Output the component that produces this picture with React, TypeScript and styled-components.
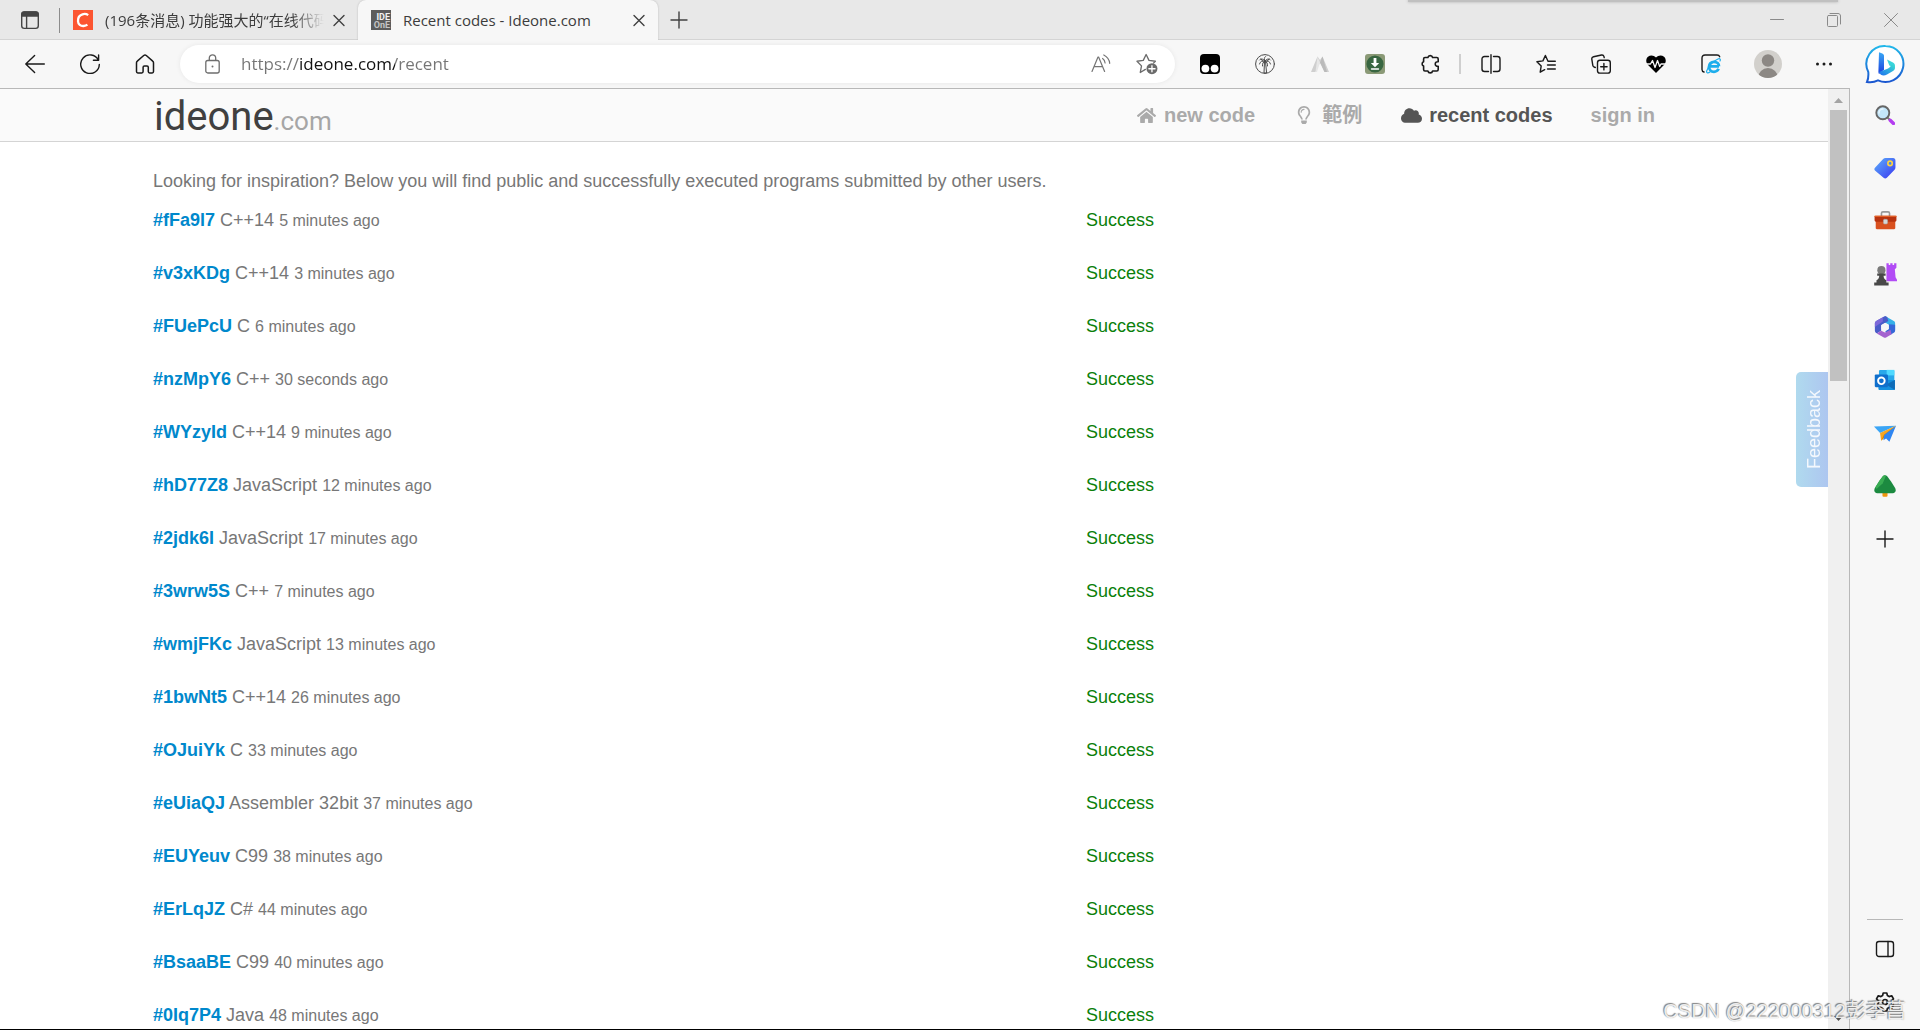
import React from "react";
import styled, { createGlobalStyle } from "styled-components";
import { FaCloud, FaHome, FaRegLightbulb } from "react-icons/fa";

const uiFont = `"Open Sans", "Noto Sans CJK SC", sans-serif`;
const pageFont = `"Liberation Sans", "Noto Sans CJK TC", sans-serif`;

const GlobalStyle = createGlobalStyle`
  *, *::before, *::after { box-sizing: border-box; }
  body { margin: 0; background: #f7f7f7; overflow: hidden; }
  button, input { font: inherit; color: inherit; }
  svg { display: block; flex: none; }
`;

const Window = styled.div`
  display: flex;
  flex-direction: column;
  height: 100vh;
  border-bottom: 1px solid #000;
  font-family: ${uiFont};
`;

/* ---------- tab strip ---------- */

const TabStrip = styled.header`
  position: relative;
  display: flex;
  flex: none;
  height: 40px;
  background: #e8e8e8;
  box-shadow: inset 0 -1px #d4d4d4;
  color: #3c3c3c;
`;

const PopupEdge = styled.div`
  position: absolute;
  top: 0;
  right: 82px;
  width: 430px;
  height: 2px;
  background: #c0c0c0;
  box-shadow: 0 0 3px #a8a8a8;
`;

const PlainButton = styled.button<{ $w: number }>`
  display: flex;
  align-items: center;
  justify-content: center;
  flex: none;
  width: ${(p) => p.$w}px;
  padding: 0;
  border: 0;
  background: none;
`;

const StripDivider = styled.span`
  width: 1px;
  height: 25px;
  margin: 8px 0 0;
  background: #8c8c8c;
`;

const Tab = styled.div<{ $active?: boolean }>`
  display: flex;
  align-items: center;
  width: ${(p) => (p.$active ? 300 : 298)}px;
  padding: 0 4px 0 13px;
  border-radius: 8px 8px 0 0;
  background: ${(p) => (p.$active ? "#f7f7f7" : "transparent")};
  box-shadow: ${(p) => (p.$active ? "0 0 2px #b4b4b4" : "none")};
  clip-path: inset(0 -4px 0 -4px);
`;

const TabTitle = styled.button<{ $fade?: boolean }>`
  display: flex;
  align-items: center;
  gap: 12px;
  flex: 1;
  min-width: 0;
  height: 40px;
  padding: 0;
  border: 0;
  background: none;
  font-size: 15px;
  line-height: 20px;
  white-space: nowrap;
  text-align: left;
  mask-image: ${(p) =>
    p.$fade ? "linear-gradient(to left, transparent, #000 32px)" : "none"};
`;

const StripSpacer = styled.div`
  flex: 1;
`;

/* ---------- toolbar ---------- */

const Main = styled.div`
  display: flex;
  flex: 1;
  min-height: 0;
  background: #f7f7f7;
`;

const Content = styled.div`
  display: flex;
  flex-direction: column;
  flex: 1;
  min-width: 0;
`;

const Toolbar = styled.nav`
  display: flex;
  align-items: center;
  flex: none;
  height: 48px;
  padding-left: 7px;
`;

const AddressBar = styled.label`
  display: flex;
  align-items: center;
  flex: 1;
  height: 38px;
  margin: 0 7px 0 8px;
  padding: 0 5px 0 25px;
  border-radius: 19px;
  background: #fff;
  box-shadow: 0 0 5px rgba(0, 0, 0, 0.07);
`;

const UrlInput = styled.input`
  flex: 1;
  min-width: 0;
  margin-left: 21px;
  padding: 0;
  border: 0;
  outline: 0;
  font-size: 17px;
  line-height: 24px;
  color: transparent;
  background: linear-gradient(
    to right,
    #757575 59px,
    #111 59px,
    #111 154px,
    #757575 154px
  );
  background-clip: text;
`;

const ToolDivider = styled.span`
  width: 2px;
  height: 20px;
  margin: 0 2px;
  background: #cfcfcf;
`;

/* ---------- web page ---------- */

const Viewport = styled.div`
  position: relative;
  display: flex;
  flex: 1;
  min-height: 0;
  border: solid #b8b8b8;
  border-width: 1px 1px 0 0;
  background: #fff;
  font-family: ${pageFont};
`;

const Page = styled.div`
  flex: 1;
  min-width: 0;
  overflow: hidden;
`;

const PageHeader = styled.header`
  height: 53px;
  border-bottom: 1px solid #d4d4d4;
  background: #fafafa;
`;

const Container = styled.div`
  max-width: 1522px;
  margin: 0 auto;
`;

const HeaderRow = styled(Container)`
  display: flex;
  justify-content: space-between;
  height: 52px;
`;

const Logo = styled.a`
  display: flex;
  align-items: baseline;
  padding-left: 1px;
  font-family: Roboto, sans-serif;
  font-size: 40px;
  line-height: 56px;
  color: #404040;
  text-decoration: none;
`;

const LogoSuffix = styled.span`
  font-size: 26px;
  color: #a6a6a6;
`;

const SiteNav = styled.nav`
  display: flex;
  gap: 38px;
  padding-right: 20px;
`;

const NavLink = styled.a<{ $current?: boolean }>`
  display: flex;
  align-items: center;
  gap: 7px;
  font-size: 20px;
  line-height: 24px;
  font-weight: 700;
  text-decoration: none;
  color: ${(p) => (p.$current ? "#555" : "#aaa")};
`;

const NavIcon = styled.span`
  display: flex;
  justify-content: center;
  min-width: 22px;
`;

const Intro = styled.p`
  margin: 27px 0 0;
  font-size: 18px;
  line-height: 24px;
  color: #777;
`;

const CodeTable = styled.table`
  width: 100%;
  table-layout: fixed;
  border-collapse: collapse;
  font-size: 18px;
  line-height: 24px;
  color: #777;
`;

const Cell = styled.td`
  height: 53px;
  padding: 15px 0 0;
  vertical-align: baseline;
`;

const CodeCell = styled(Cell)`
  width: 61.3%;
`;

const StatusCell = styled(Cell)`
  color: #0a800a;
`;

const CodeLink = styled.a`
  font-weight: 700;
  color: #08c;
  text-decoration: none;
`;

const Ago = styled.span`
  font-size: 16px;
`;

const Feedback = styled.button`
  position: absolute;
  top: 283px;
  right: 21px;
  width: 32px;
  height: 115px;
  padding: 0 4px 0 0;
  border: 0;
  border-radius: 0 5px 5px 0;
  background: linear-gradient(to left, #b0daee, #adc6f0);
  color: #f4f8fd;
  font-size: 18px;
  line-height: 24px;
  writing-mode: vertical-rl;
  transform: rotate(180deg);
`;

const Scrollbar = styled.div`
  display: flex;
  flex-direction: column;
  align-items: center;
  justify-content: space-between;
  width: 21px;
  background: #f0f0f0;
`;

const ScrollTrack = styled.div`
  flex: 1;
  width: 17px;
`;

const ScrollThumb = styled.div`
  height: 30.2%;
  background: #c1c1c1;
`;

/* ---------- sidebar ---------- */

const Sidebar = styled.aside`
  display: flex;
  flex-direction: column;
  align-items: center;
  width: 70px;
  padding-bottom: 1px;
`;

const SideButton = styled.button<{ $h?: number }>`
  display: flex;
  align-items: center;
  justify-content: center;
  flex: none;
  width: 70px;
  height: ${(p) => p.$h ?? 53}px;
  padding: 0;
  border: 0;
  background: none;
`;

const SideRule = styled.span`
  width: 36px;
  height: 1px;
  margin: auto 0 2px;
  background: #b8b8b8;
`;

const Watermark = styled.div`
  position: absolute;
  right: 14px;
  bottom: 5px;
  font-family: "Liberation Sans", "Noto Sans CJK SC", sans-serif;
  font-size: 20px;
  line-height: 28px;
  color: rgba(255, 255, 255, 0.85);
  text-shadow: -1px -1px 1px rgba(90, 90, 90, 0.75), 0 0 1px rgba(90, 90, 90, 0.6);
  pointer-events: none;
`;

/* ---------- icons ---------- */

type IconProps = {
  size?: number;
  color?: string;
  width?: number;
  children: React.ReactNode;
};

const Icon = ({ size = 20, color = "#1a1a1a", width = 1.4, children }: IconProps) => (
  <svg
    width={size}
    height={size}
    viewBox="0 0 20 20"
    fill="none"
    stroke={color}
    strokeWidth={width}
    strokeLinecap="round"
    strokeLinejoin="round"
    aria-hidden="true"
  >
    {children}
  </svg>
);

const CloseIcon = () => (
  <Icon color="#404040">
    <path d="M5 5.5l10 10M15 5.5l-10 10" />
  </Icon>
);

const TabActionsIcon = () => (
  <Icon color="#454545">
    <rect x="1.7" y="2" width="16.6" height="16.4" rx="2.6" />
    <path d="M2 4.4A2.4 2.4 0 0 1 4.4 2h11.2A2.4 2.4 0 0 1 18 4.4V6H2z" fill="#454545" />
    <path d="M6.6 6v12" />
  </Icon>
);

const CsdnIcon = () => (
  <svg width="20" height="20" viewBox="0 0 20 20" aria-hidden="true">
    <path d="M0 0h20v20H0z" fill="#fc5531" />
    <path
      d="M15.2 5.2C13.6 4 11.4 3.700 9.500 4.300 6.500 5.200 4.800 8 5 11.200c.2 3.300 2.600 5 5.600 4.800 1.500-.1 2.800-.5 3.800-1.300"
      fill="none"
      stroke="#fff"
      strokeWidth="2.3"
    />
  </svg>
);

const IdeoneIcon = () => (
  <svg width="20" height="20" viewBox="0 0 20 20" aria-hidden="true">
    <path d="M0 0h20v20H0z" fill="#5c5c5c" />
    <g fontFamily="Roboto, sans-serif" fontSize="9" fontWeight="700" fill="#f2f2f2">
      <text x="19" y="10" textAnchor="end">IDE</text>
      <text x="19" y="18" textAnchor="end" fill="#c4c4c4">OnE</text>
    </g>
  </svg>
);

const BackIcon = () => (
  <Icon>
    <path d="M19.300 10H.8M9.600 1.500L.8 10l8.800 8.500" />
  </Icon>
);

const RefreshIcon = () => (
  <Icon>
    <path d="M18.300 6A9.300 9.300 0 1 0 19.300 10.400M18.600 1v5.200h-5.200" />
  </Icon>
);

const HomeIcon = () => (
  <Icon width={1.5}>
    <path d="M1.500 8.800c0-.7.3-1.300.8-1.700l6.400-5.600c.8-.7 1.800-.7 2.600 0l6.400 5.600c.5.4.8 1 .8 1.700v8.700c0 .9-.5 1.400-1.300 1.400h-2.600c-.8 0-1.300-.5-1.300-1.300v-4.300c0-.9-.5-1.400-1.300-1.400h-2.600c-.8 0-1.300.5-1.300 1.400v4.300c0 .8-.5 1.300-1.300 1.300H2.800c-.8 0-1.300-.5-1.300-1.400z" />
  </Icon>
);

const LockIcon = () => (
  <svg width="15" height="20" viewBox="0 0 15 20" fill="none" stroke="#6e6e6e" strokeWidth="1.3" aria-hidden="true">
    <rect x=".8" y="6.5" width="13.4" height="12.5" rx="2" />
    <path d="M4.300 6.500V4a3.200 3.200 0 0 1 6.400 0v2.500" />
    <circle cx="7.5" cy="12.5" r="1" fill="#6e6e6e" stroke="none" />
  </svg>
);

const ReadAloudIcon = () => (
  <Icon color="#757575" width={1.2}>
    <path d="M1 17.500L7 3h.6l6 14.500M3.200 12.600h8.200M11.600 4.500c1.500 1 2.300 2.500 2.500 4.500M12.800 1c3.300 1.700 5.500 4.500 5.900 8.300" />
  </Icon>
);

const StarAddIcon = () => (
  <Icon color="#6b6b6b" width={1.2} size={22}>
    <path d="M8.500 14.900l-4.600 2.800 1.100-6L.9 7.500l5.700-.8L9.200 1.400l2.600 5.300 5.800.8-1.700 1.700" />
    <circle cx="14.5" cy="14.3" r="5" fill="#6b6b6b" stroke="none" />
    <path d="M14.500 11.500v5.600M11.700 14.300h5.600" stroke="#fff" />
  </Icon>
);

const TamperIcon = () => (
  <Icon>
    <rect width="20" height="20" rx="4" fill="#000" stroke="none" />
    <circle cx="5.4" cy="14.6" r="3.9" fill="#fff" stroke="none" />
    <circle cx="14.6" cy="14.6" r="3.9" fill="#fff" stroke="none" />
  </Icon>
);

const PalmIcon = () => (
  <Icon color="#4a4a4a" width={1}>
    <circle cx="10" cy="10" r="9.4" />
    <path d="M9.500 7.500L9 19h2.600L10.500 7.500M10 7C8.500 5 6 4 4.500 6M10 7c-2.500-.6-5 .4-5.500 3M10 7c-1.800.8-3 3-2.500 5M10 7c1.500-2 4-3 5.500-1M10 7c2.500-.6 5 .4 5.500 3M10 7c1.800.8 3 3 2.500 5M10 7c-1-1.500-1-3.500.5-4.500M6 5l2.500 3M14 5l-2.500 3" />
  </Icon>
);

const PeakIcon = () => (
  <Icon>
    <path d="M1 18L7.500 2.500 10 6l2.500-3.500L19 18h-4.500L10 8.500 5.500 18z" fill="#cfcfcf" stroke="none" />
    <path d="M7.500 2.500L10 8.500 7 18H5.500z" fill="#e6e6e6" stroke="none" />
    <path d="M12.500 2.500L10 8.500 14.500 18H17z" fill="#bababa" stroke="none" />
  </Icon>
);

const DownloadIcon = () => (
  <Icon>
    <rect width="20" height="20" rx="3" fill="#8b9a77" stroke="none" />
    <circle cx="10" cy="10" r="8.6" fill="#386641" stroke="none" />
    <path d="M8.600 4h2.800v5h2.800L10 13.200 5.800 9h2.800z" fill="#fff" stroke="none" />
    <path d="M6.500 15h7" stroke="#fff" />
  </Icon>
);

const PuzzleIcon = () => (
  <Icon width={1.6}>
    <path d="M5 3.500h2.900a2.400 2.400 0 0 1 4.700 0h4.200c.9 0 1.400.5 1.400 1.400v2.900a2.300 2.300 0 1 0 0 4.400v3.400c0 .9-.5 1.400-1.400 1.400h-4.200a2.400 2.400 0 0 1-4.700 0H5c-.9 0-1.400-.5-1.400-1.400v-3.500a2.300 2.300 0 0 1 0-4.300V4.900c0-.9.500-1.400 1.400-1.400z" />
  </Icon>
);

const SplitIcon = () => (
  <Icon>
    <path d="M7.500 2.500H3.500C2 2.500 1 3.500 1 5v10c0 1.500 1 2.500 2.500 2.500h4M12.500 2.500h4C18 2.500 19 3.500 19 5v10c0 1.500-1 2.500-2.500 2.500h-4M10 .8v18.400" />
  </Icon>
);

const FavoritesIcon = () => (
  <Icon>
    <path d="M12 7.200L9.400 1.500 6.900 6.900.9 7.700l4.300 4.200-1 6.300 4.500-2.500M12 7.200h7.300M11.500 11h7.800M11.500 15h7.800" />
  </Icon>
);

const CollectionsIcon = () => (
  <Icon>
    <rect x="6.5" y="6.3" width="12.8" height="12.8" rx="2.4" />
    <path d="M12.900 9.500v6.400M9.700 12.700h6.400M4.300 13.500L3 13c-.7-.4-1-.9-1.200-1.700L.8 5.200c-.2-1.300.4-2.200 1.700-2.500l8-1.700c1.300-.2 2.200.4 2.500 1.600l.2 1" />
  </Icon>
);

const HeartIcon = () => (
  <Icon>
    <path d="M10 19L1.800 10.800C-.4 8.400-.2 4.700 2 2.700c2.300-2 5.800-1.700 8 .7 2.200-2.400 5.700-2.700 8-.7 2.200 2 2.400 5.700.2 8.100z" fill="#000" stroke="none" />
    <path d="M0 10h4.500l2-3.500 2.500 7 2.500-7 2.200 6 1.300-2.500h5" stroke="#f7f7f7" strokeWidth="1.3" />
  </Icon>
);

const IeIcon = () => (
  <Icon>
    <path d="M3 18c-1.300-.3-2-1.200-2-2.500V4C1 2.200 2.200 1 4 1h12c1.300 0 2.300.6 2.700 1.800" />
    <path d="M18 12.300H8.500M17.600 14.800c-.9 2-2.600 3-4.600 3-3 0-5-2.200-5-5s2-5 5-5 5 2 5 4.500" stroke="#1eaeec" strokeWidth="2.8" strokeLinecap="butt" />
    <path d="M9 18c-2 1.500-3.800 1-3.300-1C6.500 13 12 7 17 5c2-.8 2.800.3 2 2" stroke="#1eaeec" strokeWidth="1.2" />
  </Icon>
);

const AvatarIcon = () => (
  <svg width="28" height="28" viewBox="0 0 28 28" aria-hidden="true">
    <defs>
      <clipPath id="avatar"><circle cx="14" cy="14" r="14" /></clipPath>
    </defs>
    <circle cx="14" cy="14" r="14" fill="#d2d0cc" />
    <circle cx="14" cy="10.5" r="6.2" fill="#8c8884" />
    <circle cx="14" cy="28" r="10" fill="#8c8884" clipPath="url(#avatar)" />
  </svg>
);

const DotsIcon = () => (
  <Icon>
    <g fill="#1a1a1a" stroke="none">
      <circle cx="3.5" cy="10" r="1.5" />
      <circle cx="10" cy="10" r="1.5" />
      <circle cx="16.5" cy="10" r="1.5" />
    </g>
  </Icon>
);

const BingIcon = () => (
  <svg width="40" height="40" viewBox="0 0 40 40" aria-hidden="true">
    <defs>
      <linearGradient id="bingRing" x1="0" y1="0" x2="0" y2="1">
        <stop offset="0" stopColor="#22b8ea" />
        <stop offset="1" stopColor="#1a56d0" />
      </linearGradient>
      <linearGradient id="bingStem" x1="0" y1="0" x2="0" y2="1">
        <stop offset="0" stopColor="#3ba8f5" />
        <stop offset="1" stopColor="#1a3ede" />
      </linearGradient>
      <linearGradient id="bingBowl" x1="0" y1="1" x2="1" y2="0">
        <stop offset="0" stopColor="#1f6ff0" />
        <stop offset="1" stopColor="#3ae0d0" />
      </linearGradient>
    </defs>
    <path d="M20.500 2A18 18 0 1 1 13 36.400c-3.500 1.800-7 2.300-11 1.600 1.400-3 1.600-6 1.300-10A18 18 0 0 1 20.500 2z" fill="#fff" stroke="url(#bingRing)" strokeWidth="2" />
    <path d="M14 8.300l3.300 1.200c1 .4 1.700 1.300 1.700 2.300v14l-5 4.200c-.4-.8-.6-1.600-.6-2.600z" fill="url(#bingStem)" />
    <path d="M22 15.500l6 3c2 1.200 2.500 3 1.600 5.400-1-.8-2-1.300-3.300-1.700l-2-.8z" fill="#3ad4dc" />
    <path d="M14 28c1.500 4 5 4.300 8 2.500l6-3.500c2-1.300 2.500-3.300 1.500-5-.6-.9-1.700-1.300-3-1.500-.6 2-2 3.200-4 4.200z" fill="url(#bingBowl)" />
  </svg>
);

const SearchEmoji = () => (
  <Icon>
    <path d="M13 13l1.500 1.500" stroke="#777" strokeWidth="2" />
    <path d="M15.200 15.200l3.300 3.300" stroke="#b43df0" strokeWidth="3.4" />
    <circle cx="7.8" cy="7.8" r="6.5" fill="#c3e6fa" stroke="#666" strokeWidth="1.9" />
    <path d="M4 8a4 4 0 0 1 4-4" stroke="#e6f6ff" />
  </Icon>
);

const TagEmoji = () => (
  <Icon size={22}>
    <defs>
      <linearGradient id="tag" x1="0" y1="0" x2="1" y2="1">
        <stop offset="0" stopColor="#5cb0fb" />
        <stop offset="1" stopColor="#3a35f0" />
      </linearGradient>
    </defs>
    <path d="M10.500 1h6.800c1.400 0 2.200.9 2.200 2.200v6.300c0 .8-.3 1.400-.8 2l-7 7.300c-1 1-2 1-3 0L1.100 12.500c-1-1-1-2 0-3l7.200-7.600c.6-.6 1.300-.9 2.200-.9z" fill="url(#tag)" stroke="none" />
    <circle cx="14.6" cy="5.8" r="2" fill="#3f86f0" stroke="#ffd23e" strokeWidth="1.5" />
  </Icon>
);

const ToolboxEmoji = () => (
  <Icon size={23}>
    <path d="M6.500 6V3.800c0-.8.5-1.300 1.300-1.300h4.400c.8 0 1.300.5 1.300 1.300V6" stroke="#999" />
    <path d="M1.500 9h17v7.500c0 .6-.4 1-1 1h-15c-.6 0-1-.4-1-1z" fill="#d9501e" stroke="none" />
    <path d="M1.300 5.800h17.400c.5 0 .8.3.8.8v3.200c0 .7-.5 1.200-1.200 1.200H1.700c-.7 0-1.200-.5-1.200-1.200V6.600c0-.5.3-.8.8-.8z" fill="#b8330f" stroke="none" />
    <path d="M.6 6.300h18.800" stroke="#f07030" strokeWidth="1" />
    <rect x="8.2" y="9" width="3.6" height="4" rx="1" fill="#d5d5d5" stroke="#aaa" strokeWidth=".5" />
  </Icon>
);

const ChessEmoji = () => (
  <Icon size={24}>
    <path d="M11.200 1h1.900v1.500h1.300V1h1.900v1.500h1.300V1h1.900v3.800l-1.300 1.300.6 6.600 1.200 2v1.300h-8.800z" fill="#b24cf5" stroke="none" />
    <circle cx="7" cy="6.800" r="3.400" fill="#7a7a7a" stroke="none" />
    <path d="M3.500 9.500h7v1.900H8.800c.1 1.800.7 3 2.300 3.900V17h1.900v2.500H1V17h1.900v-1.700c1.600-.9 2.200-2.100 2.300-3.900H3.500z" fill="#484848" stroke="none" />
  </Icon>
);

const M365Emoji = () => (
  <Icon size={22}>
    <path d="M10 0l8 4.500c.8.4 1.200 1 1.200 1.800v6.200l-6-4.700L10 6z" fill="#35b0e8" stroke="none" />
    <path d="M10 0L2 4.500C1.200 5 .8 5.600.8 6.400v7c0 1 .7 2 2 2.300l3.700-2.200V8.400L13 4.500 12 1z" fill="#4a5cc8" stroke="none" />
    <path d="M8 1.100L2 4.500C1.200 5 .8 5.600.8 6.400V10L8 5z" fill="#7d68d8" stroke="none" />
    <path d="M19.200 8v5.500c0 .8-.4 1.400-1.200 1.800l-3 1.700-5-3.200 3.500-2.200V7.500z" fill="#3567d8" stroke="none" />
    <path d="M2.500 15.800l4-2.300 3.500 1.400 5-2.300 1 3.900-5 3c-.7.500-1.300.5-2 0z" fill="#a463cf" stroke="none" />
    <path d="M10 6.400l3.300 1.800v3.800L10 13.900 6.700 12V8.200z" fill="#f7f7f7" stroke="none" />
  </Icon>
);

const OutlookEmoji = () => (
  <Icon size={22}>
    <rect x="4.5" y=".8" width="14" height="13" rx="1" fill="#28a8ea" stroke="none" />
    <path d="M11.500.8h7v5h-7z" fill="#50d9ff" stroke="none" />
    <path d="M4 10h15v8c0 .7-.5 1.200-1.200 1.200H5.200c-.7 0-1.200-.5-1.200-1.200z" fill="#1490df" stroke="none" />
    <path d="M19 10v9L11 14z" fill="#0f6cb8" stroke="none" />
    <rect x=".7" y="5" width="12" height="11.5" rx="1" fill="#0f6fcc" stroke="none" />
    <circle cx="6.7" cy="10.7" r="3" stroke="#fff" strokeWidth="1.7" />
  </Icon>
);

const PlaneEmoji = () => (
  <Icon size={22}>
    <path d="M0 4L20 3.500 5.500 10z" fill="#3ba5f5" stroke="none" />
    <path d="M20 3.500L5.500 10l1 7z" fill="#f5a623" stroke="none" />
    <path d="M20 3.500L9 11.500 6.500 17z" fill="#d98206" stroke="none" />
    <path d="M20 3.500L14 18l-3-3-2.500 1.500.8-4.700z" fill="#2f86f2" stroke="none" />
  </Icon>
);

const TreeEmoji = () => (
  <Icon size={22}>
    <rect x="7.7" y="14" width="4.6" height="5.8" rx="1" fill="#f0960f" stroke="none" />
    <path d="M8.200.9c1-1 2.600-1 3.600 0l3.400 4.600 4 6.400c1.200 2.400.2 4.600-2.200 4.600H3c-2.400 0-3.400-2.200-2.200-4.600l4-6.400z" fill="#1c8a40" stroke="none" />
    <path d="M8.200.9c.9-.9 1.900-.9 2.600 0L8 7.500l-5.500 5-1.500-1 3.800-6z" fill="#39ad53" stroke="none" />
  </Icon>
);

const PlusIcon = ({ color = "#1a1a1a" }: { color?: string }) => (
  <Icon color={color}>
    <path d="M10 2v16M2 10h16" />
  </Icon>
);

const PanelIcon = () => (
  <Icon>
    <rect x="1.5" y="2.5" width="17" height="15" rx="2.5" />
    <path d="M13 2.500v15" />
  </Icon>
);

const GearIcon = () => (
  <Icon width={1.7}>
    <path d="M8.200 1h3.600l.6 2.600 1.700 1 2.600-.8 1.800 3.100-2 1.900v2.400l2 1.900-1.800 3.100-2.600-.8-1.700 1-.6 2.600H8.200l-.6-2.600-1.700-1-2.600.8-1.800-3.100 2-1.900V8.800l-2-1.900 1.800-3.100 2.600.8 1.700-1z" />
    <circle cx="10" cy="10" r="2.5" />
  </Icon>
);

const Arrow = ({ down }: { down?: boolean }) => (
  <svg width="21" height="21" viewBox="0 0 21 21" aria-hidden="true">
    <path d={down ? "M6 8h9l-4.500 5z" : "M6 14h9l-4.500-5z"} fill={down ? "#505050" : "#a3a3a3"} />
  </svg>
);

/* ---------- data ---------- */

const codes = [
  ["fFa9l7", "C++14", "5 minutes ago"],
  ["v3xKDg", "C++14", "3 minutes ago"],
  ["FUePcU", "C", "6 minutes ago"],
  ["nzMpY6", "C++", "30 seconds ago"],
  ["WYzyId", "C++14", "9 minutes ago"],
  ["hD77Z8", "JavaScript", "12 minutes ago"],
  ["2jdk6I", "JavaScript", "17 minutes ago"],
  ["3wrw5S", "C++", "7 minutes ago"],
  ["wmjFKc", "JavaScript", "13 minutes ago"],
  ["1bwNt5", "C++14", "26 minutes ago"],
  ["OJuiYk", "C", "33 minutes ago"],
  ["eUiaQJ", "Assembler 32bit", "37 minutes ago"],
  ["EUYeuv", "C99", "38 minutes ago"],
  ["ErLqJZ", "C#", "44 minutes ago"],
  ["BsaaBE", "C99", "40 minutes ago"],
  ["0Iq7P4", "Java", "48 minutes ago"],
];

const extensions = [
  ["Tampermonkey", <TamperIcon />],
  ["Palm", <PalmIcon />],
  ["Peak", <PeakIcon />],
  ["Downloader", <DownloadIcon />],
  ["Extensions", <PuzzleIcon />],
] as const;

const browserTools = [
  ["Split screen", <SplitIcon />],
  ["Favorites", <FavoritesIcon />],
  ["Collections", <CollectionsIcon />],
  ["Browser essentials", <HeartIcon />],
  ["Internet Explorer mode", <IeIcon />],
] as const;

const sideApps = [
  ["Search", <SearchEmoji />],
  ["Shopping", <TagEmoji />],
  ["Tools", <ToolboxEmoji />],
  ["Games", <ChessEmoji />],
  ["Microsoft 365", <M365Emoji />],
  ["Outlook", <OutlookEmoji />],
  ["Drop", <PlaneEmoji />],
  ["E-tree", <TreeEmoji />],
] as const;

export default function App() {
  return (
    <Window>
      <GlobalStyle />
      <TabStrip>
        <PlainButton $w={59} aria-label="Tab actions"><TabActionsIcon /></PlainButton>
        <StripDivider />
        <Tab>
          <TabTitle $fade><CsdnIcon />(196条消息) 功能强大的“在线代码</TabTitle>
          <PlainButton $w={30} aria-label="Close tab"><CloseIcon /></PlainButton>
        </Tab>
        <Tab $active>
          <TabTitle><IdeoneIcon />Recent codes - Ideone.com</TabTitle>
          <PlainButton $w={30} aria-label="Close tab"><CloseIcon /></PlainButton>
        </Tab>
        <PlainButton $w={42} aria-label="New tab"><PlusIcon color="#404040" /></PlainButton>
        <StripSpacer />
        <PlainButton $w={57} aria-label="Minimize">
          <Icon color="#8a8a8a" width={1}><path d="M3.500 9.500h13" /></Icon>
        </PlainButton>
        <PlainButton $w={57} aria-label="Restore">
          <Icon color="#8a8a8a" width={1}>
            <rect x="3.5" y="5.5" width="10" height="11" rx="1" />
            <path d="M6 3.500h8c1.500 0 2.500 1 2.500 2.500v8" />
          </Icon>
        </PlainButton>
        <PlainButton $w={58} aria-label="Close window">
          <Icon color="#8a8a8a" width={1}><path d="M3.500 3.500l13 13M16.500 3.500l-13 13" /></Icon>
        </PlainButton>
        <PopupEdge />
      </TabStrip>

      <Main>
        <Content>
          <Toolbar>
            <PlainButton $w={55} aria-label="Back"><BackIcon /></PlainButton>
            <PlainButton $w={55} aria-label="Refresh"><RefreshIcon /></PlainButton>
            <PlainButton $w={55} aria-label="Home"><HomeIcon /></PlainButton>
            <AddressBar>
              <LockIcon />
              <UrlInput aria-label="Address" defaultValue="https://ideone.com/recent" />
              <PlainButton $w={46} aria-label="Read aloud"><ReadAloudIcon /></PlainButton>
              <PlainButton $w={46} aria-label="Add to favorites"><StarAddIcon /></PlainButton>
            </AddressBar>
            {extensions.map(([name, icon]) => (
              <PlainButton key={name} $w={55} aria-label={name}>{icon}</PlainButton>
            ))}
            <ToolDivider />
            {browserTools.map(([name, icon]) => (
              <PlainButton key={name} $w={55} aria-label={name}>{icon}</PlainButton>
            ))}
            <PlainButton $w={59} aria-label="Profile"><AvatarIcon /></PlainButton>
            <PlainButton $w={53} aria-label="Settings and more"><DotsIcon /></PlainButton>
          </Toolbar>

          <Viewport>
            <Page>
              <PageHeader>
                <HeaderRow>
                  <Logo href="#home">ideone<LogoSuffix>.com</LogoSuffix></Logo>
                  <SiteNav>
                    <NavLink href="#new"><NavIcon><FaHome size={19} /></NavIcon>new code</NavLink>
                    <NavLink href="#samples"><NavIcon><FaRegLightbulb size={18} /></NavIcon>範例</NavLink>
                    <NavLink href="#recent" $current><NavIcon><FaCloud size={21} /></NavIcon>recent codes</NavLink>
                    <NavLink href="#login">sign in</NavLink>
                  </SiteNav>
                </HeaderRow>
              </PageHeader>
              <Container as="main">
                <Intro>
                  Looking for inspiration? Below you will find public and successfully executed programs submitted by other users.
                </Intro>
                <CodeTable>
                  <tbody>
                    {codes.map(([id, lang, ago]) => (
                      <tr key={id}>
                        <CodeCell>
                          <CodeLink href={`#${id}`}>#{id}</CodeLink> {lang} <Ago>{ago}</Ago>
                        </CodeCell>
                        <StatusCell>Success</StatusCell>
                      </tr>
                    ))}
                  </tbody>
                </CodeTable>
              </Container>
            </Page>
            <Feedback>Feedback</Feedback>
            <Scrollbar>
              <Arrow />
              <ScrollTrack><ScrollThumb /></ScrollTrack>
              <Arrow down />
            </Scrollbar>
          </Viewport>
        </Content>

        <Sidebar>
          <SideButton $h={48} aria-label="Bing chat"><BingIcon /></SideButton>
          {sideApps.map(([name, icon]) => (
            <SideButton key={name} aria-label={name}>{icon}</SideButton>
          ))}
          <SideButton aria-label="Customize"><PlusIcon /></SideButton>
          <SideRule />
          <SideButton aria-label="Hide sidebar"><PanelIcon /></SideButton>
          <SideButton aria-label="Settings"><GearIcon /></SideButton>
        </Sidebar>
      </Main>
      <Watermark>CSDN @222000312彭季菖</Watermark>
    </Window>
  );
}
